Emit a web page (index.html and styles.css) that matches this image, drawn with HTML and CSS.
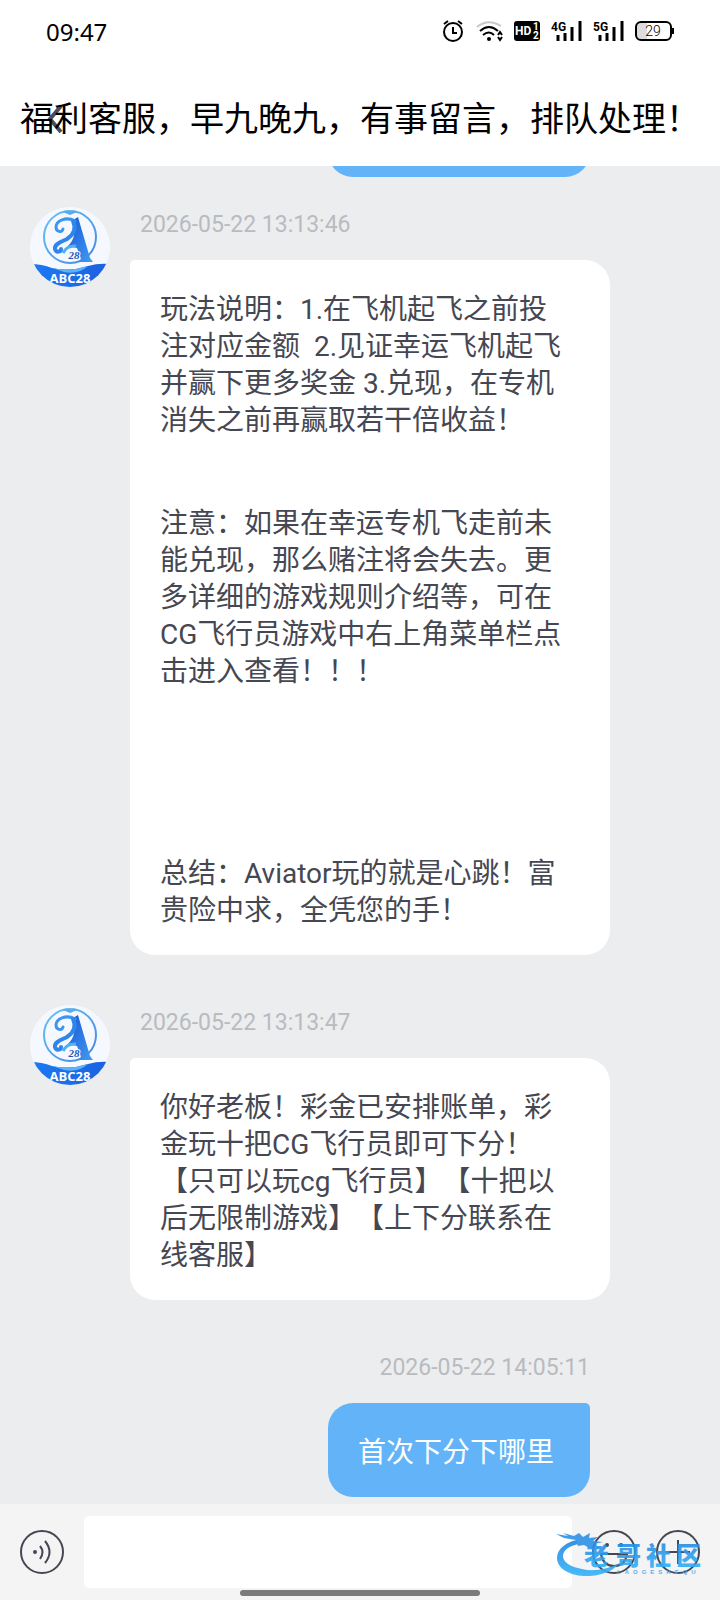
FILE: index.html
```
<!DOCTYPE html>
<html lang="zh-CN">
    <head>
        <meta charset="utf-8">
        <meta name="viewport" content="width=device-width, initial-scale=1">
        <title>福利客服</title>
        <link rel="stylesheet" href="styles.css">
    </head>
    <body>
        <div class="status">
            <span class="time">09:47</span>
            <svg class="status-icons" width="236" height="26" viewBox="0 0 236 26" aria-hidden="true">
                <!-- alarm -->
                <g fill="none" stroke="#000" stroke-width="2">
                    <circle cx="13" cy="14" r="9"/>
                    <path d="M13 9V15H17M4 6L8 3M22 6L18 3"/>
                </g>
                <!-- wifi -->
                <g fill="none" stroke="#000" stroke-width="2">
                    <path d="M37 9Q48 0 61 8" stroke="#c8c8c8"/>
                    <path d="M40 13Q49 5 58 13"/>
                    <path d="M43 17Q49 12 54 17"/>
                    <path d="M58 17L60 14L62 17M58 19L60 22L62 19"/>
                </g>
                <circle cx="49" cy="21" r="2" fill="#000"/>
                <!-- hd -->
                <rect x="74" y="3" width="26" height="20" rx="3" fill="#000"/>
                <text x="75" y="17" class="hd">HD</text>
                <text x="93" y="12" class="hd-num">1</text>
                <text x="93" y="21" class="hd-num">2</text>
                <!-- signals -->
                <text x="111" y="13" class="net">4G</text>
                <path d="M118 17V23M125 15V23M132 9V23M140 3V23" stroke="#000" stroke-width="3"/>
                <text x="153" y="13" class="net">5G</text>
                <path d="M160 17V23M167 15V23M174 9V23M182 3V23" stroke="#000" stroke-width="3"/>
                <!-- battery -->
                <path d="M201 4H207V22H201Q196 22 196 17V9Q196 4 201 4Z" fill="#ddd"/>
                <rect x="196" y="4" width="35" height="18" rx="5" fill="none" stroke="#000" stroke-width="2"/>
                <path d="M233 10V16" stroke="#000" stroke-width="2"/>
                <text x="213" y="18" class="battery">29</text>
            </svg>
        </div>

        <header class="header">
            <button class="back" type="button" aria-label="返回">
                <svg width="16" height="30" viewBox="0 0 16 30"><path d="M14 2L3 15L14 28" fill="none" stroke="#4b4d58" stroke-width="4"/></svg>
            </button>
            <h1>福利客服，早九晚九，有事留言，排队处理！</h1>
        </header>

        <main class="chat">
            <div class="message own">
                <div class="bubble short"></div>
            </div>

            <div class="message">
                <svg class="avatar" width="80" height="80" viewBox="0 0 80 80">
                    <defs>
                        <linearGradient id="blueA" x1="0" y1="0" x2="1" y2="1">
                            <stop offset="0" stop-color="#1b57d6"/>
                            <stop offset="1" stop-color="#3f9df2"/>
                        </linearGradient>
                        <linearGradient id="blueBand" x1="0" y1="0" x2="1" y2="0">
                            <stop offset="0" stop-color="#1c7af2"/>
                            <stop offset="1" stop-color="#1c5fe0"/>
                        </linearGradient>
                        <linearGradient id="blueRing" x1="0" y1="0" x2="1" y2="1">
                            <stop offset="0" stop-color="#68c4f2"/>
                            <stop offset="1" stop-color="#4585e4"/>
                        </linearGradient>
                        <clipPath id="round"><circle cx="40" cy="40" r="40"/></clipPath>
                    </defs>
                    <g id="logo" clip-path="url(#round)">
                        <rect width="80" height="80" fill="#f5f9ff"/>
                        <circle cx="40" cy="30" r="26" fill="none" stroke="url(#blueRing)" stroke-width="2"/>
                        <path d="M33 5q4-3 7 0q4-3 7 0l-7 3z" fill="#5ba8ee"/>
                        <path d="M43 13L48 10L60 51L63 55H48L51 52L47 41L38 39Q43 34 44 28Z" fill="url(#blueA)"/>
                        <path d="M45 14C36 9 26 14 26 20C26 25 32 26 33 22" fill="none" stroke="#3c96ee" stroke-width="3" stroke-linecap="round"/>
                        <path d="M43 14C47 22 43 28 37 32C31 35 24 37 25 42C26 46 31 45 31 42" fill="none" stroke="#2f86ea" stroke-width="4" stroke-linecap="round"/>
                        <path d="M46 39Q37 38 33 46" fill="none" stroke="#4fb0f3" stroke-width="3"/>
                        <text x="44" y="52" class="logo-num">28</text>
                        <path d="M0 57Q12 57 22 61Q40 65 58 59Q68 56 80 57V80H0Z" fill="url(#blueBand)"/>
                        <path d="M22 61Q40 65 58 59Q48 68 34 65Z" fill="#58b4f6"/>
                        <text x="40" y="76" class="logo-name">ABC28</text>
                    </g>
                </svg>
                <div class="content">
                    <time>2026-05-22 13:13:46</time>
                    <div class="bubble">
                        <p>玩法说明：1.在飞机起飞之前投<br>注对应金额&nbsp; 2.见证幸运飞机起飞<br>并赢下更多奖金 3.兑现，在专机<br>消失之前再赢取若干倍收益！</p>
                        <p>注意：如果在幸运专机飞走前未<br>能兑现，那么赌注将会失去。更<br>多详细的游戏规则介绍等，可在<br>CG飞行员游戏中右上角菜单栏点<br>击进入查看！！！</p>
                        <p class="summary">总结：Aviator玩的就是心跳！富<br>贵险中求，全凭您的手！</p>
                    </div>
                </div>
            </div>

            <div class="message">
                <svg class="avatar" width="80" height="80" viewBox="0 0 80 80"><use href="#logo"/></svg>
                <div class="content">
                    <time>2026-05-22 13:13:47</time>
                    <div class="bubble">
                        <p>你好老板！彩金已安排账单，彩<br>金玩十把CG飞行员即可下分！<br>【只可以玩cg飞行员】【十把以<br>后无限制游戏】【上下分联系在<br>线客服】</p>
                    </div>
                </div>
            </div>

            <div class="message own">
                <time>2026-05-22 14:05:11</time>
                <div class="bubble short"><p>首次下分下哪里</p></div>
            </div>
        </main>

        <footer class="toolbar">
            <button class="icon" type="button" aria-label="语音">
                <svg width="44" height="44" viewBox="0 0 44 44" fill="none" stroke="#454752" stroke-width="2">
                    <circle cx="22" cy="22" r="21"/>
                    <circle cx="15" cy="22" r="2" fill="#454752" stroke="none"/>
                    <path d="M20 16Q25 22 20 29M25 11Q34 22 25 33" stroke-width="2"/>
                </svg>
            </button>
            <input type="text" class="text" aria-label="消息">
            <button class="icon" type="button" aria-label="表情">
                <svg width="44" height="44" viewBox="0 0 44 44" fill="none" stroke="#454752" stroke-width="2">
                    <circle cx="22" cy="22" r="21"/>
                    <circle cx="15" cy="15" r="2" fill="#454752" stroke="none"/>
                    <circle cx="29" cy="15" r="2" fill="#454752" stroke="none"/>
                    <path d="M9 24H35Q33 36 22 36Q11 36 9 24Z"/>
                </svg>
            </button>
            <button class="icon" type="button" aria-label="更多">
                <svg width="44" height="44" viewBox="0 0 44 44" fill="none" stroke="#454752" stroke-width="2">
                    <circle cx="22" cy="22" r="21"/>
                    <path d="M22 10V34M10 22H34"/>
                </svg>
            </button>

            <div class="watermark">
                <svg width="150" height="50" viewBox="0 0 150 50" aria-hidden="true">
                    <defs>
                        <linearGradient id="blueMark" x1="0" y1="0" x2="0" y2="1">
                            <stop offset="0" stop-color="#2384e0"/>
                            <stop offset="1" stop-color="#35b4fa"/>
                        </linearGradient>
                    </defs>
                    <path d="M26 9C10 11 1 19 1 28C1 40 17 47 34 46C48 45 58 40 64 33C52 39 38 42 26 39C14 37 7 32 7 26C7 19 16 14 30 13Z" fill="url(#blueMark)"/>
                    <path d="M0 4L12 6L7 3L18 6L23 3L27 7L34 3L33 8L42 7L37 11L47 12L38 14L45 19L35 16L37 20L28 15L22 16L20 10L8 8Z" fill="#2f92e6"/>
                    <text x="28 60 90 120" y="35" class="mark-name">老哥社区</text>
                    <text x="61" y="44" class="mark-latin">LAOGESHEQU</text>
                </svg>
            </div>
            <div class="home-bar"></div>
        </footer>
    </body>
</html>
```
FILE: styles.css
```
* {
    box-sizing: border-box;
}

body {
    margin: 0;
    height: 100vh;
    display: flex;
    flex-direction: column;
    background-color: #fff;
    font-family: Roboto, "Noto Sans CJK SC", sans-serif;
    text-spacing-trim: space-all;
}

h1, p {
    margin: 0;
    font-weight: normal;
}

button {
    padding: 0;
    border: none;
    background: none;
    cursor: pointer;
}

svg {
    display: block;
}

/* Status bar */
.status {
    flex: none;
    height: 62px;
    padding: 0 44px 0 46px;
    display: flex;
    align-items: center;
    justify-content: space-between;
}

.time {
    font-family: "Noto Sans", sans-serif;
    font-size: 24px;
}

.net {
    font: bold 12px Roboto, sans-serif;
}

.hd {
    font: bold 12px Roboto, sans-serif;
    fill: #fff;
}

.hd-num {
    font: bold 10px Roboto, sans-serif;
    fill: #fff;
}

.battery {
    font: 300 14px Roboto, sans-serif;
    text-anchor: middle;
}

/* Title */
.header {
    position: relative;
    flex: none;
    height: 104px;
    padding: 10px 20px 0;
    display: flex;
    align-items: center;
}

.header h1 {
    position: relative;
    font-size: 34px;
    line-height: 48px;
    white-space: nowrap;
    color: #000;
}

.back {
    position: absolute;
    left: 47px;
    top: 42px;
}

/* Messages */
.chat {
    flex: 1;
    min-height: 0;
    padding: 0 30px 7px;
    display: flex;
    flex-direction: column;
    justify-content: flex-end;
    overflow: hidden;
    background-color: #ecedef;
}

.message {
    flex: none;
    display: flex;
    align-items: flex-start;
    gap: 20px;
    margin-bottom: 50px;
}

.message.own {
    flex-direction: column;
    align-items: flex-end;
    gap: 0;
    margin-right: 100px;
    margin-bottom: 30px;
}

.message.own:last-child {
    margin-bottom: 0;
}

.avatar {
    flex: none;
}

.content {
    flex: 1;
    margin-right: 80px;
}

time {
    display: block;
    margin-bottom: 17px;
    padding-left: 10px;
    font-size: 23px;
    line-height: 36px;
    color: #b9bbbf;
}

.own time {
    padding: 0;
}

.bubble {
    padding: 31px 20px 26px 30px;
    border-radius: 5px 25px 25px 25px;
    background-color: #fff;
    color: #454752;
    font-size: 28px;
    line-height: 37px;
}

.bubble p + p {
    margin-top: 66px;
}

.bubble p.summary {
    margin-top: 165px;
}

.own .bubble {
    width: 262px;
    min-height: 94px;
    border-radius: 25px 5px 25px 25px;
    background-color: #62b3f7;
    color: #fff;
}

/* Input bar */
.toolbar {
    position: relative;
    flex: none;
    padding: 12px 20px;
    display: flex;
    align-items: center;
    gap: 20px;
    background-color: #f4f4f4;
}

.icon {
    flex: none;
}

.text {
    flex: 1;
    min-width: 0;
    height: 72px;
    padding: 0 20px;
    border: none;
    border-radius: 5px;
    background-color: #fff;
    font-size: 28px;
}

.watermark {
    position: absolute;
    right: 14px;
    top: 26px;
    opacity: 0.9;
    pointer-events: none;
}

.home-bar {
    position: absolute;
    left: 50%;
    bottom: 4px;
    width: 240px;
    height: 6px;
    margin-left: -120px;
    border-radius: 3px;
    background-color: #7a7a7a;
}

/* Logo texts */
.logo-num {
    font: italic bold 11px "Liberation Serif", serif;
    text-anchor: middle;
    fill: #1f56b8;
    stroke: #f5f9ff;
    stroke-width: 2px;
    paint-order: stroke;
}

.logo-name {
    font: bold 13px "Open Sans", sans-serif;
    text-anchor: middle;
    fill: #fff;
}

.mark-name {
    font: 900 25px "Noto Sans CJK SC", sans-serif;
    fill: url(#blueMark);
}

.mark-latin {
    font: bold 6px "Liberation Sans", sans-serif;
    letter-spacing: 4px;
    fill: #4aa8ee;
}
```
